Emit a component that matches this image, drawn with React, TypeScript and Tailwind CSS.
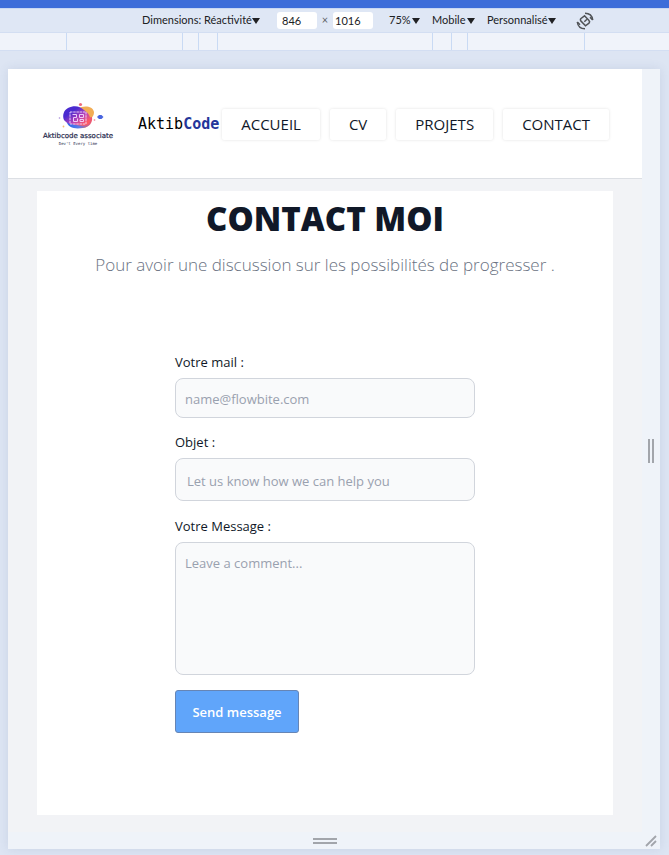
import React from "react";

const navItems = ["ACCUEIL", "CV", "PROJETS", "CONTACT"];

function Caret() {
  return (
    <svg viewBox="0 0 8 6" className="h-[6px] w-2 shrink-0" aria-hidden="true">
      <path d="M0 0h8L4 6z" fill="#202124" />
    </svg>
  );
}

function MenuButton({ children, className }: { children: string; className: string }) {
  return (
    <button type="button" className={`flex shrink-0 items-center justify-between whitespace-nowrap ${className}`}>
      <span>{children}</span>
      <Caret />
    </button>
  );
}

function RotateIcon() {
  return (
    <svg viewBox="0 0 18 18" className="size-[18px]" fill="none" stroke="#505357" strokeWidth="1.500" aria-hidden="true">
      <path d="M9 1.300c4.300 0 7.200 2.700 7.700 6.700" />
      <path d="M9 16.700c-4.300 0-7.200-2.700-7.700-6.700" />
      <path d="M16.700 8l-2.700-2.700M1.300 10l2.700 2.700" />
      <path d="M8.500 3.800 5 6.500c-.8.8-.8 1.800 0 2.600l4.500 4.700 3.500-2.600c.8-.8.8-1.800 0-2.600z" />
      <path d="M11 7.300 8.300 9.700" />
    </svg>
  );
}

function Toolbar() {
  return (
    <div className="flex h-6 items-center border-t border-[#c9d8f3] bg-[#dfe7f5] pl-[142px] font-['Lato','Open_Sans',sans-serif] text-[11px] text-[#202124]">
      <MenuButton className="w-[117px]">Dimensions: Réactivité</MenuButton>
      <input
        aria-label="Largeur"
        defaultValue="846"
        className="ml-[18px] h-[17px] w-10 rounded-[3px] bg-white px-[5px] outline-none"
      />
      <span className="w-4 shrink-0 text-center text-[#5f6368]">×</span>
      <input
        aria-label="Hauteur"
        defaultValue="1016"
        className="h-[17px] w-10 rounded-[3px] bg-white px-[2px] outline-none"
      />
      <MenuButton className="ml-4 w-[31px]">75%</MenuButton>
      <MenuButton className="ml-3 w-[43px]">Mobile</MenuButton>
      <MenuButton className="ml-3 w-[69px]">Personnalisé</MenuButton>
      <button type="button" aria-label="Faire pivoter" className="ml-[20px] shrink-0">
        <RotateIcon />
      </button>
    </div>
  );
}

function Ruler() {
  return (
    <div className="flex h-[19px] justify-center border-y border-[#d3def2] bg-[#f0f3fa] pr-[19px]">
      <div className="flex divide-x divide-[#c9daf4] border-x border-[#c9daf4]">
        <span className="w-[116px]" />
        <span className="w-4" />
        <span className="w-[19px]" />
        <span className="w-[215px]" />
        <span className="w-[19px]" />
        <span className="w-4" />
        <span className="w-[116px]" />
      </div>
    </div>
  );
}

function Logo() {
  return (
    <svg viewBox="0 0 76 48" className="h-12 w-[76px] shrink-0" role="img" aria-label="Aktibcode associate">
      <defs>
        <linearGradient id="blob" x1="0" y1="0" x2="1" y2="1">
          <stop offset="0.300" stopColor="#4a2bd0" />
          <stop offset="0.600" stopColor="#b844b8" />
          <stop offset="0.850" stopColor="#ff5a63" />
        </linearGradient>
        <linearGradient id="base" x1="0" y1="0" x2="1" y2="0">
          <stop offset="0" stopColor="#2563eb" />
          <stop offset="0.500" stopColor="#5b7ee8" />
          <stop offset="1" stopColor="#fb5564" />
        </linearGradient>
      </defs>
      <path d="M37 8c5-4 15-3 16 3 0 5-3 5-4 9-1 6-5 8-9 6z" fill="#f2ad55" />
      <path d="M25 19c2 9 10 9 17 8 6-1 10-5 9-11l-11 2z" fill="url(#base)" />
      <path d="M27 7c6-3 12-2 16 2 4 3 7 6 6 11-1 6-8 5-14 4-5-1-9-1-12-5-2-5 0-10 4-12z" fill="url(#blob)" />
      <g fill="none" stroke="#f4d9ff" strokeWidth="0.900">
        <rect x="29" y="11" width="16" height="12" strokeDasharray="2.500 0.700" />
        <path d="M31.500 13.500h4v3h-3v4h4v-3M38.500 13.500v3h4v-3zM39 20.500v-2h3.500v2z" />
      </g>
      <circle cx="39.500" cy="3.500" r="1.600" fill="#f06b7b" />
      <path d="m56 16 2-2h2.500l2 2-2 2H58z" fill="#4965df" />
      <circle cx="18.500" cy="17" r="0.800" fill="#a78bda" />
      <circle cx="22.500" cy="25.500" r="0.900" fill="#f4be70" />
      <circle cx="53.500" cy="19" r="0.900" fill="#f29bad" />
      <text x="37" y="37" textAnchor="middle" fontSize="7" fontWeight="400" fill="#24284a" stroke="#24284a" strokeWidth="0.200" fontFamily="'DejaVu Sans', sans-serif">
        Aktibcode associate
      </text>
      <text x="37" y="44" textAnchor="middle" fontSize="4" fill="#2d3050" fontFamily="'DejaVu Sans Mono', monospace">
        Dev&apos;t Every time
      </text>
    </svg>
  );
}

function Header() {
  return (
    <header className="flex h-[110px] items-center border-b border-[#dcdfe4] bg-white px-[33px] pt-[2px]">
      <Logo />
      <a href="#accueil" className="ml-[21px] w-20 shrink-0 font-['DejaVu_Sans_Mono',monospace] text-[15px] text-black">
        Aktib<span className="font-bold text-[#24369a]">Code</span>
      </a>
      <nav className="ml-auto flex shrink-0 gap-[10px] text-[15px] leading-[31px] text-gray-900">
        {navItems.map((item) => (
          <a
            key={item}
            href={`#${item.toLowerCase()}`}
            className="rounded-[2px] bg-white px-[19px] shadow-[0_0_3px_rgba(0,0,0,0.12)]"
          >
            {item}
          </a>
        ))}
      </nav>
    </header>
  );
}

const fieldClass =
  "block w-full rounded-lg border border-gray-300 bg-gray-50 text-[13px] text-gray-900 placeholder-gray-400 outline-none";

function ContactForm() {
  return (
    <form className="mx-auto mt-[73px] max-w-[300px] text-[13px] font-medium text-gray-900">
      <label htmlFor="mail" className="block leading-5">Votre mail :</label>
      <input id="mail" type="email" placeholder="name@flowbite.com" className={`mt-[6px] h-10 px-[9px] pt-[2px] font-normal ${fieldClass}`} />
      <label htmlFor="subject" className="mt-[14px] block leading-5">Objet :</label>
      <input id="subject" type="text" placeholder="Let us know how we can help you" className={`mt-[6px] h-[43px] px-[11px] pt-[2px] font-normal ${fieldClass}`} />
      <label htmlFor="message" className="mt-[15px] block leading-5">Votre Message :</label>
      <textarea id="message" placeholder="Leave a comment..." className={`mt-[6px] h-[133px] resize-none px-[9px] py-[10px] font-normal leading-5 ${fieldClass}`} />
      <button type="submit" className="mt-[15px] h-[43px] w-[124px] rounded-[3px] border border-[#6685b5] bg-[#60a5fa] pt-[2px] font-semibold text-white">
        Send message
      </button>
    </form>
  );
}

export default function App() {
  return (
    <div className="flex min-h-screen flex-col bg-[#dde5f3] font-['Open_Sans','Noto_Sans',sans-serif]">
      <div className="h-2 bg-[#3d6dd9]" />
      <Toolbar />
      <Ruler />
      <div className="mt-[18px] mr-[9px] mb-[6px] ml-2 flex grow flex-col bg-[#eff3f9] shadow-[0_0_10px_rgba(60,80,130,0.12)]">
        <div className="flex grow">
          <div className="flex min-w-0 grow flex-col bg-[#f2f3f6]">
            <Header />
            <main className="mx-[29px] mt-3 mb-[17px] grow bg-white pb-20 text-center">
              <h1 className="pt-1 text-[33px] leading-[48px] font-extrabold text-[#101828]">CONTACT MOI</h1>
              <p className="mt-2 text-[17px] leading-[28px] font-light text-gray-500">
                Pour avoir une discussion sur les possibilités de progresser .
              </p>
              <div className="text-left">
                <ContactForm />
              </div>
            </main>
          </div>
          <div className="flex w-[18px] shrink-0 items-center justify-center">
            <div className="h-6 w-[6px] border-x-2 border-[#a2a5ab]" />
          </div>
        </div>
        <div className="flex h-[17px] items-center">
          <div className="flex grow justify-center">
            <div className="h-[6px] w-6 border-y-2 border-[#a2a5ab]" />
          </div>
          <div className="flex w-[18px] justify-center">
            <svg viewBox="0 0 12 12" className="size-3" fill="none" stroke="#a2a5ab" strokeWidth="1.800" aria-hidden="true">
              <path d="M1 11 11 1M6 11l5-5" />
            </svg>
          </div>
        </div>
      </div>
    </div>
  );
}
